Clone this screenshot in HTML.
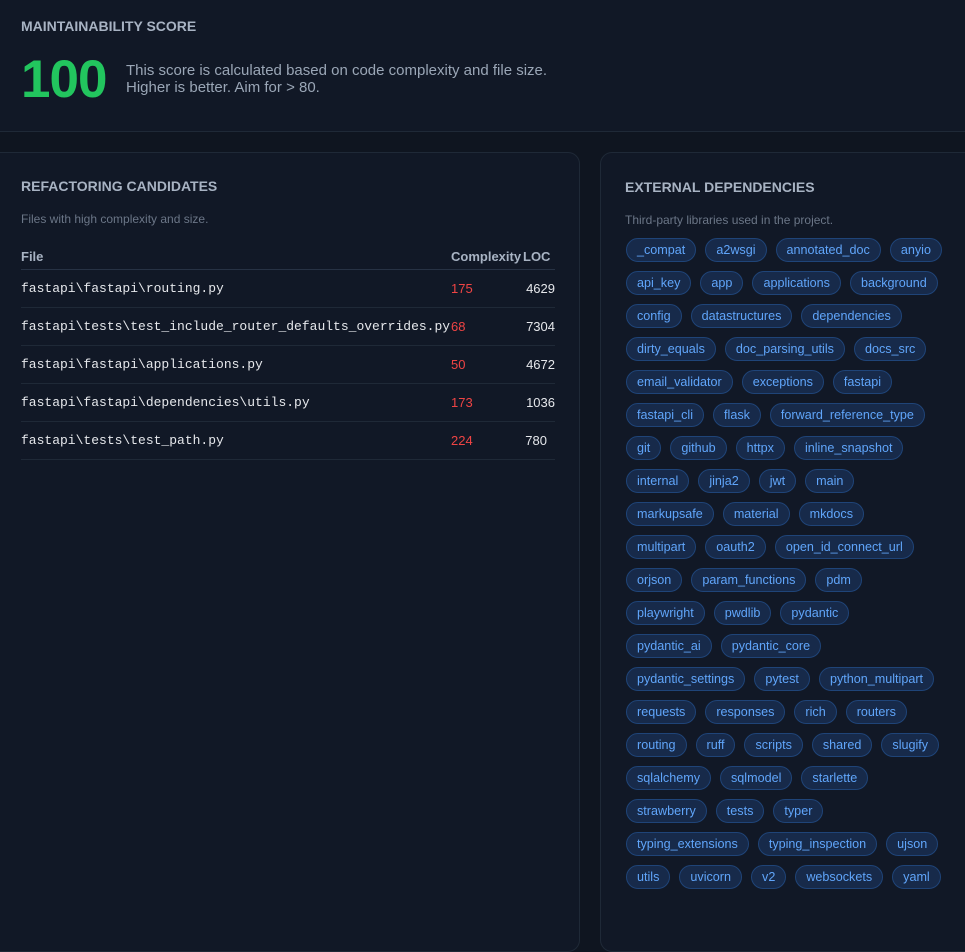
<!DOCTYPE html>
<html><head><meta charset="utf-8"><style>
html,body{margin:0;padding:0;background:#0f1520;width:965px;height:900px;overflow:hidden;font-family:"Liberation Sans",sans-serif}
.card{position:absolute;background:#111826;border:1px solid #1f2937;border-radius:12px;box-sizing:border-box}
h2{margin:0;font-size:14px;font-weight:bold;color:#a8b3c3;letter-spacing:0}
.top{left:-12px;top:-12px;width:990px;height:144px}
.score{position:absolute;left:21px;top:49px;font-size:53px;font-weight:bold;color:#22c55e;letter-spacing:-1px}
.desc{position:absolute;left:126px;top:62px;font-size:15px;line-height:17px;color:#9aa6b6}
.sub{font-size:12px;color:#6b7687}
table{border-collapse:collapse;position:absolute;left:21px;top:243px;width:534px}
th{font-size:13px;color:#a8b3c3;text-align:left;height:26px;border-bottom:1px solid #273244;padding:0}
td{font-family:"Liberation Mono",monospace;font-size:13px;color:#e5e7eb;height:37px;border-bottom:1px solid #1f2937;padding:0}
td.c{color:#ef4444;font-family:"Liberation Sans",sans-serif}
td.l{font-family:"Liberation Sans",sans-serif;text-align:right}
.tags{position:absolute;left:25px;top:85px;width:360px}
.tags div{display:flex;gap:9px;height:24px;margin-bottom:9px;white-space:nowrap}
.tags span{display:inline-block;height:22px;line-height:22px;padding:0 10px;border-radius:12px;background:#172a4a;border:1px solid #1f4478;color:#60a5fa;font-size:12.6px}
</style></head><body>
<div class="card top"></div>
<div style="position:absolute;left:21px;top:18px"><h2>MAINTAINABILITY SCORE</h2></div>
<div class="score">100</div>
<div class="desc">This score is calculated based on code complexity and file size.<br>Higher is better. Aim for &gt; 80.</div>

<div class="card" style="left:-12px;top:152px;width:592px;height:800px"></div>
<div style="position:absolute;left:21px;top:178px"><h2>REFACTORING CANDIDATES</h2><div class="sub" style="margin-top:18px">Files with high complexity and size.</div></div>
<table>
<tr><th>File</th><th style="width:72px">Complexity</th><th style="width:32px">LOC</th></tr>
<tr><td>fastapi\fastapi\routing.py</td><td class="c">175</td><td class="l">4629</td></tr>
<tr><td>fastapi\tests\test_include_router_defaults_overrides.py</td><td class="c">68</td><td class="l">7304</td></tr>
<tr><td>fastapi\fastapi\applications.py</td><td class="c">50</td><td class="l">4672</td></tr>
<tr><td>fastapi\fastapi\dependencies\utils.py</td><td class="c">173</td><td class="l">1036</td></tr>
<tr><td>fastapi\tests\test_path.py</td><td class="c">224</td><td class="l" style="padding-right:8px">780</td></tr>
</table>

<div class="card" style="left:600px;top:152px;width:400px;height:800px">
<div style="position:absolute;left:24px;top:26px"><h2>EXTERNAL DEPENDENCIES</h2><div class="sub" style="margin-top:18px">Third-party libraries used in the project.</div></div>
<div class="tags">
<div><span>_compat</span><span>a2wsgi</span><span>annotated_doc</span><span>anyio</span></div>
<div><span>api_key</span><span>app</span><span>applications</span><span>background</span></div>
<div><span>config</span><span>datastructures</span><span>dependencies</span></div>
<div><span>dirty_equals</span><span>doc_parsing_utils</span><span>docs_src</span></div>
<div><span>email_validator</span><span>exceptions</span><span>fastapi</span></div>
<div><span>fastapi_cli</span><span>flask</span><span>forward_reference_type</span></div>
<div><span>git</span><span>github</span><span>httpx</span><span>inline_snapshot</span></div>
<div><span>internal</span><span>jinja2</span><span>jwt</span><span>main</span></div>
<div><span>markupsafe</span><span>material</span><span>mkdocs</span></div>
<div><span>multipart</span><span>oauth2</span><span>open_id_connect_url</span></div>
<div><span>orjson</span><span>param_functions</span><span>pdm</span></div>
<div><span>playwright</span><span>pwdlib</span><span>pydantic</span></div>
<div><span>pydantic_ai</span><span>pydantic_core</span></div>
<div><span>pydantic_settings</span><span>pytest</span><span>python_multipart</span></div>
<div><span>requests</span><span>responses</span><span>rich</span><span>routers</span></div>
<div><span>routing</span><span>ruff</span><span>scripts</span><span>shared</span><span>slugify</span></div>
<div><span>sqlalchemy</span><span>sqlmodel</span><span>starlette</span></div>
<div><span>strawberry</span><span>tests</span><span>typer</span></div>
<div><span>typing_extensions</span><span>typing_inspection</span><span>ujson</span></div>
<div><span>utils</span><span>uvicorn</span><span>v2</span><span>websockets</span><span>yaml</span></div>
</div>
</div>
</body></html>
